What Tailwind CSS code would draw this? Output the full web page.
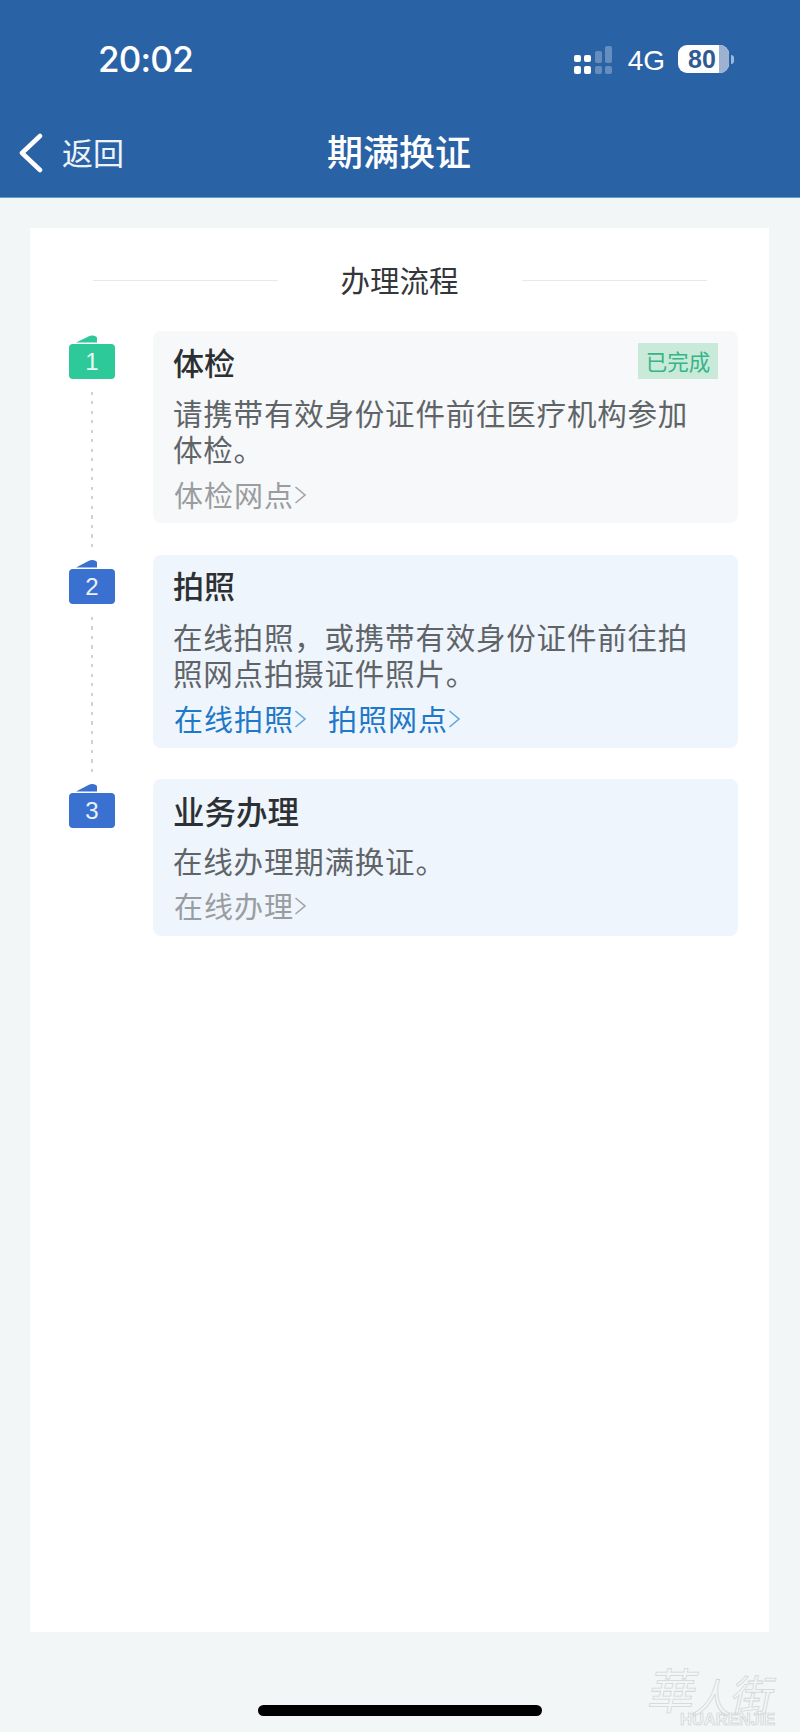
<!doctype html>
<html lang="zh-CN">
<head>
<meta charset="utf-8">
<script src="https://cdn.jsdelivr.net/npm/@tailwindcss/browser@4"></script>
</head>
<body class="m-0">
<div class="relative w-[800px] h-[1732px] overflow-hidden flex flex-col bg-[#f2f6f6] font-['Noto_Sans_CJK_SC','Noto_Sans',sans-serif]">
  <!-- Header -->
  <header class="h-[198px] bg-[#2a62a6] border-b border-[#5f9fc9] text-white flex flex-col shrink-0">
    <div class="h-[118px] flex pt-[40px] pl-[98px] pr-[66px] justify-between items-start">
      <span class="font-['Inter',sans-serif] text-[35px] leading-[38px] font-medium tracking-[-0.8px]">20:02</span>
      <div class="flex items-center gap-[11px] pt-[9px] h-[32px]">
        <svg width="40" height="28" viewBox="0 0 40 28" class="-mt-[2px]">
          <g fill="#fff"><rect x="1" y="9" width="7" height="7" rx="2"/><rect x="11" y="9" width="7" height="7" rx="2"/><rect x="1" y="20" width="7" height="8" rx="2"/><rect x="11" y="20" width="7" height="8" rx="2"/></g>
          <g fill="#fff" fill-opacity=".28"><rect x="22" y="5" width="7" height="12" rx="2"/><rect x="22" y="20" width="7" height="8" rx="2"/><rect x="32" y="0" width="7" height="17" rx="2"/><rect x="32" y="20" width="7" height="8" rx="2"/></g>
        </svg>
        <span class="ml-[4px] font-['Liberation_Sans',sans-serif] text-[28px] leading-[28px]">4G</span>
        <div class="flex items-center ml-[2px] -mt-[3px]">
          <div class="relative w-[51px] h-[28px] rounded-[9px] overflow-hidden bg-white flex">
            <span class="w-[41px] pl-[10px] font-['Liberation_Sans',sans-serif] font-bold text-[25px] leading-[28px] text-[#2f5a94]">80</span>
            <span class="flex-1 bg-[#9db2d0]"></span>
          </div>
          <span class="ml-[2px] w-[3px] h-[9px] rounded-r bg-[#9db8dc]"></span>
        </div>
      </div>
    </div>
    <div class="relative flex items-center h-[79px] pl-[18px] -mt-[6px]">
      <svg width="26" height="40" viewBox="0 0 26 40" fill="none" stroke="#fff" stroke-width="4.5" stroke-linecap="round" stroke-linejoin="round" class="mt-[3px]"><path d="M22 3 4 20l18 17"/></svg>
      <span class="ml-[18px] text-[31px] leading-[40px] font-normal text-[#eef3f9]">返回</span>
      <h1 class="absolute inset-x-0 -top-px text-center text-[36px] leading-[79px] font-medium -translate-x-px">期满换证</h1>
    </div>
  </header>

  <!-- Card -->
  <main class="mx-[30px] mt-[30px] h-[1404px] w-[739px] shrink-0 bg-white pt-[36px]">
    <div class="flex items-center justify-center gap-[61px]">
      <span class="w-[185px] h-px bg-[#e5e9ea] translate-y-px"></span>
      <h2 class="text-[29.5px] leading-[30px] font-normal text-[#33363a] w-[122px] text-center whitespace-nowrap">办理流程</h2>
      <span class="w-[185px] h-px bg-[#e5e9ea] translate-y-px"></span>
    </div>

    <div class="mt-[37px] pl-[39px] pr-[31px] flex flex-col">
      <!-- Step 1 -->
      <section class="flex gap-[38px]">
        <div class="w-[46px] shrink-0 flex flex-col items-center pt-[4px]">
          <svg width="46" height="9" viewBox="0 0 46 9" class="block"><path d="M7 7.500 20.500 1Q22 .2 24 .5L26.500 1.200Q28 1.700 28 3V7.500Z" fill="#2ec998"/></svg>
          <div class="w-[46px] h-[35px] rounded-[4px] bg-[#2ec998] text-white/90 font-['Liberation_Sans',sans-serif] text-[24px] leading-[35px] text-center">1</div>
          <div class="flex-1 mt-[13px] mb-[5px] w-[2px] bg-[repeating-linear-gradient(to_bottom,#cfd2d5_0,#cfd2d5_3px,transparent_3px,transparent_9.5px)]"></div>
        </div>
        <div class="relative flex-1 mb-[32px] rounded-[8px] bg-[#f7f8f9] pt-[12px] pb-[10px] px-[20px]">
          <h3 class="text-[31px] leading-[38px] font-medium text-[#2d3033]">体检</h3>
          <span class="absolute top-[12px] right-[20px] w-[80px] h-[36px] bg-[#c9ead9] text-[#35b58a] text-[21.5px] leading-[36px] text-center">已完成</span>
          <p class="mt-[14px] w-[522px] text-[29.5px] leading-[35.5px] tracking-[0.8px] text-[#5f6468]">请携带有效身份证件前往医疗机构参加体检。</p>
          <div class="mt-[11px] pl-px h-[36px] flex items-center text-[29px] tracking-[1px] text-[#9a9da0]">
            <span>体检网点</span>
            <svg width="13" height="20" viewBox="0 0 13 20" fill="none" stroke="#a0a3a6" stroke-width="1.6"><path d="M1.5 2 11 10 1.500 18"/></svg>
          </div>
        </div>
      </section>
      <!-- Step 2 -->
      <section class="flex gap-[38px]">
        <div class="w-[46px] shrink-0 flex flex-col items-center pt-[4px]">
          <svg width="46" height="10" viewBox="0 0 46 10" class="block"><path d="M7 8.500 20.500 1.500Q22 .7 24 1L26.500 1.700Q28 2.200 28 3.500V8.500Z" fill="#3a70cf"/></svg>
          <div class="w-[46px] h-[35px] rounded-[4px] bg-[#3a70cf] text-white/90 font-['Liberation_Sans',sans-serif] text-[24px] leading-[35px] text-center">2</div>
          <div class="flex-1 mt-[13px] mb-[6px] w-[2px] bg-[repeating-linear-gradient(to_bottom,#cfd2d5_0,#cfd2d5_3px,transparent_3px,transparent_9.5px)]"></div>
        </div>
        <div class="flex-1 mb-[31px] rounded-[8px] bg-[#eff5fc] pt-[11px] pb-[11px] px-[20px]">
          <h3 class="text-[31px] leading-[38px] font-medium text-[#2d3033]">拍照</h3>
          <p class="mt-[15px] w-[522px] text-[29.5px] leading-[35.5px] tracking-[0.8px] text-[#5f6468]">在线拍照，或携带有效身份证件前往拍照网点拍摄证件照片。</p>
          <div class="mt-[11px] pl-px h-[36px] flex items-center text-[29px] tracking-[1px] text-[#1f78c8]">
            <span>在线拍照</span>
            <svg width="13" height="20" viewBox="0 0 13 20" fill="none" stroke="#63a8de" stroke-width="1.6"><path d="M1.5 2 11 10 1.500 18"/></svg>
            <span class="ml-[21px]">拍照网点</span>
            <svg width="13" height="20" viewBox="0 0 13 20" fill="none" stroke="#63a8de" stroke-width="1.6"><path d="M1.5 2 11 10 1.500 18"/></svg>
          </div>
        </div>
      </section>
      <!-- Step 3 -->
      <section class="flex gap-[38px]">
        <div class="w-[46px] shrink-0 flex flex-col items-center pt-[4px]">
          <svg width="46" height="10" viewBox="0 0 46 10" class="block"><path d="M7 8.500 20.500 1.500Q22 .7 24 1L26.500 1.700Q28 2.200 28 3.500V8.500Z" fill="#3a70cf"/></svg>
          <div class="w-[46px] h-[35px] rounded-[4px] bg-[#3a70cf] text-white/90 font-['Liberation_Sans',sans-serif] text-[24px] leading-[35px] text-center">3</div>
        </div>
        <div class="flex-1 rounded-[8px] bg-[#eff5fc] pt-[12px] pb-[12px] px-[20px]">
          <h3 class="text-[31.5px] leading-[38px] font-medium text-[#2d3033]">业务办理</h3>
          <p class="mt-[14px] text-[29.5px] leading-[35.5px] tracking-[0.8px] text-[#5f6468]">在线办理期满换证。</p>
          <div class="mt-[9px] pl-px h-[36px] flex items-center text-[29px] tracking-[1px] text-[#9a9da0]">
            <span>在线办理</span>
            <svg width="13" height="20" viewBox="0 0 13 20" fill="none" stroke="#a0a3a6" stroke-width="1.6"><path d="M1.5 2 11 10 1.500 18"/></svg>
          </div>
        </div>
      </section>
    </div>
  </main>

  <!-- Home indicator -->
  <div class="mt-[73px] mx-auto w-[284px] h-[11px] rounded-full bg-black shrink-0"></div>

  <!-- Watermark -->
  <div class="absolute left-[650px] top-[1664px] w-[144px] h-[62px] pointer-events-none">
    <div class="h-[48px] flex items-start -skew-x-12 font-['Noto_Sans_CJK_TC',sans-serif] font-normal text-transparent [-webkit-text-stroke:0.8px_#d3d6d6] whitespace-nowrap leading-none">
      <span class="text-[48px]">華</span><span class="text-[40px] mt-[12px] -ml-[2px]">人</span><span class="text-[42px] mt-[8px] -ml-[2px]">街</span>
    </div>
    <div class="mt-[0px] pl-[30px] font-['Liberation_Sans',sans-serif] font-bold text-[16.5px] leading-[14px] text-transparent [-webkit-text-stroke:0.6px_#cbcdcd]">HUARENJIE</div>
  </div>
</div>
</body>
</html>
